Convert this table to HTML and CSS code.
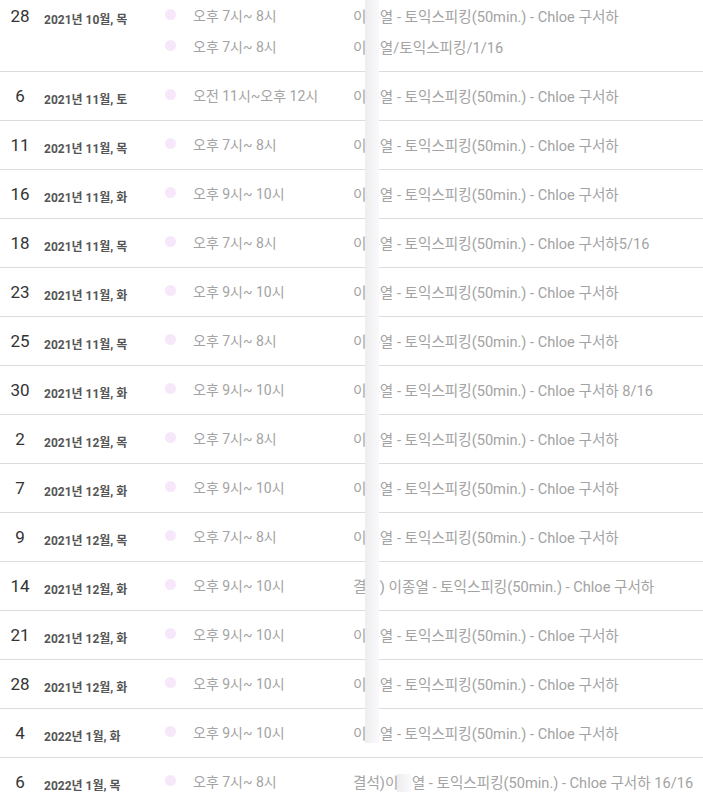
FILE: index.html
```html
<!DOCTYPE html>
<html lang="ko">
<head>
<meta charset="utf-8">
<title>수업 일정</title>
<link rel="stylesheet" href="styles.css">
</head>
<body>
<div class="page">
<!-- lesson list, scrolled a little so the first row is cut -->
<div class="schedule">
  <div class="row">
    <div class="day">28</div>
    <div class="date">2021년 10월, 목</div>
    <div class="entries">
      <div class="entry"><span class="dot"></span><span class="time">오후 7시~ 8시</span><span class="title">이종열 - 토익스피킹(50min.) - Chloe 구서하</span></div>
      <div class="entry"><span class="dot"></span><span class="time">오후 7시~ 8시</span><span class="title">이종열/토익스피킹/1/16</span></div>
    </div>
  </div>
  <div class="row">
    <div class="day">6</div>
    <div class="date">2021년 11월, 토</div>
    <div class="entries">
      <div class="entry"><span class="dot"></span><span class="time">오전 11시~오후 12시</span><span class="title">이종열 - 토익스피킹(50min.) - Chloe 구서하</span></div>
    </div>
  </div>
  <div class="row">
    <div class="day">11</div>
    <div class="date">2021년 11월, 목</div>
    <div class="entries">
      <div class="entry"><span class="dot"></span><span class="time">오후 7시~ 8시</span><span class="title">이종열 - 토익스피킹(50min.) - Chloe 구서하</span></div>
    </div>
  </div>
  <div class="row">
    <div class="day">16</div>
    <div class="date">2021년 11월, 화</div>
    <div class="entries">
      <div class="entry"><span class="dot"></span><span class="time">오후 9시~ 10시</span><span class="title">이종열 - 토익스피킹(50min.) - Chloe 구서하</span></div>
    </div>
  </div>
  <div class="row">
    <div class="day">18</div>
    <div class="date">2021년 11월, 목</div>
    <div class="entries">
      <div class="entry"><span class="dot"></span><span class="time">오후 7시~ 8시</span><span class="title">이종열 - 토익스피킹(50min.) - Chloe 구서하5/16</span></div>
    </div>
  </div>
  <div class="row">
    <div class="day">23</div>
    <div class="date">2021년 11월, 화</div>
    <div class="entries">
      <div class="entry"><span class="dot"></span><span class="time">오후 9시~ 10시</span><span class="title">이종열 - 토익스피킹(50min.) - Chloe 구서하</span></div>
    </div>
  </div>
  <div class="row">
    <div class="day">25</div>
    <div class="date">2021년 11월, 목</div>
    <div class="entries">
      <div class="entry"><span class="dot"></span><span class="time">오후 7시~ 8시</span><span class="title">이종열 - 토익스피킹(50min.) - Chloe 구서하</span></div>
    </div>
  </div>
  <div class="row">
    <div class="day">30</div>
    <div class="date">2021년 11월, 화</div>
    <div class="entries">
      <div class="entry"><span class="dot"></span><span class="time">오후 9시~ 10시</span><span class="title">이종열 - 토익스피킹(50min.) - Chloe 구서하 8/16</span></div>
    </div>
  </div>
  <div class="row">
    <div class="day">2</div>
    <div class="date">2021년 12월, 목</div>
    <div class="entries">
      <div class="entry"><span class="dot"></span><span class="time">오후 7시~ 8시</span><span class="title">이종열 - 토익스피킹(50min.) - Chloe 구서하</span></div>
    </div>
  </div>
  <div class="row">
    <div class="day">7</div>
    <div class="date">2021년 12월, 화</div>
    <div class="entries">
      <div class="entry"><span class="dot"></span><span class="time">오후 9시~ 10시</span><span class="title">이종열 - 토익스피킹(50min.) - Chloe 구서하</span></div>
    </div>
  </div>
  <div class="row">
    <div class="day">9</div>
    <div class="date">2021년 12월, 목</div>
    <div class="entries">
      <div class="entry"><span class="dot"></span><span class="time">오후 7시~ 8시</span><span class="title">이종열 - 토익스피킹(50min.) - Chloe 구서하</span></div>
    </div>
  </div>
  <div class="row">
    <div class="day">14</div>
    <div class="date">2021년 12월, 화</div>
    <div class="entries">
      <div class="entry"><span class="dot"></span><span class="time">오후 9시~ 10시</span><span class="title">결석) 이종열 - 토익스피킹(50min.) - Chloe 구서하</span></div>
    </div>
  </div>
  <div class="row">
    <div class="day">21</div>
    <div class="date">2021년 12월, 화</div>
    <div class="entries">
      <div class="entry"><span class="dot"></span><span class="time">오후 9시~ 10시</span><span class="title">이종열 - 토익스피킹(50min.) - Chloe 구서하</span></div>
    </div>
  </div>
  <div class="row">
    <div class="day">28</div>
    <div class="date">2021년 12월, 화</div>
    <div class="entries">
      <div class="entry"><span class="dot"></span><span class="time">오후 9시~ 10시</span><span class="title">이종열 - 토익스피킹(50min.) - Chloe 구서하</span></div>
    </div>
  </div>
  <div class="row">
    <div class="day">4</div>
    <div class="date">2022년 1월, 화</div>
    <div class="entries">
      <div class="entry"><span class="dot"></span><span class="time">오후 9시~ 10시</span><span class="title">이종열 - 토익스피킹(50min.) - Chloe 구서하</span></div>
    </div>
  </div>
  <div class="row">
    <div class="day">6</div>
    <div class="date">2022년 1월, 목</div>
    <div class="entries">
      <div class="entry"><span class="dot"></span><span class="time">오후 7시~ 8시</span><span class="title">결석)이종열 - 토익스피킹(50min.) - Chloe 구서하 16/16</span></div>
    </div>
  </div>
</div>
<!-- privacy blur laid over the names -->
<div class="blurBand"></div>
<div class="blurBox"></div>
</div>
</body>
</html>
```

FILE: styles.css
```css
body {
  margin: 0;
  background: #fff;
  font-family: Roboto, "Noto Sans CJK KR", sans-serif;
  overflow: hidden;
}
.page {
  position: relative;
  height: 806px;
  overflow: hidden;
}
.schedule {
  margin-top: -8px;
}
.row {
  display: flex;
  align-items: flex-start;
  padding: 10px 0;
  border-bottom: 1px solid #dcdcdc;
}
.day {
  width: 40px;
  height: 28px;
  line-height: 28px;
  text-align: center;
  font-size: 17px;
  color: #333;
}
.date {
  width: 121px;
  margin-left: 4px;
  padding-top: 4px;
  height: 24px;
  line-height: 28px;
  font-size: 12px;
  font-weight: bold;
  color: #555;
}
.entries {
  display: flex;
  flex-direction: column;
  gap: 3px;
}
.entry {
  display: flex;
  align-items: center;
  height: 28px;
  font-size: 14px;
  color: #a3a3a3;
  white-space: nowrap;
}
.dot {
  width: 11px;
  height: 11px;
  border-radius: 50%;
  background: #f7e7fb;
  margin-right: 17px;
  margin-top: -3px;
}
.time {
  width: 160px;
  margin-top: -2px;
}
.title {
  margin-top: -2px;
  font-size: 14.6px;
}
.blurBand {
  position: absolute;
  left: 365px;
  top: 0;
  width: 14px;
  height: 743px;
  background: linear-gradient(to right, #eeeeee, #f5f5f7 60%, #f9f9fb);
}
.blurBox {
  position: absolute;
  left: 397px;
  top: 774px;
  width: 14px;
  height: 18px;
  background: linear-gradient(to right, #eeeeee, #f5f5f7 60%, #f9f9fb);
}
```
